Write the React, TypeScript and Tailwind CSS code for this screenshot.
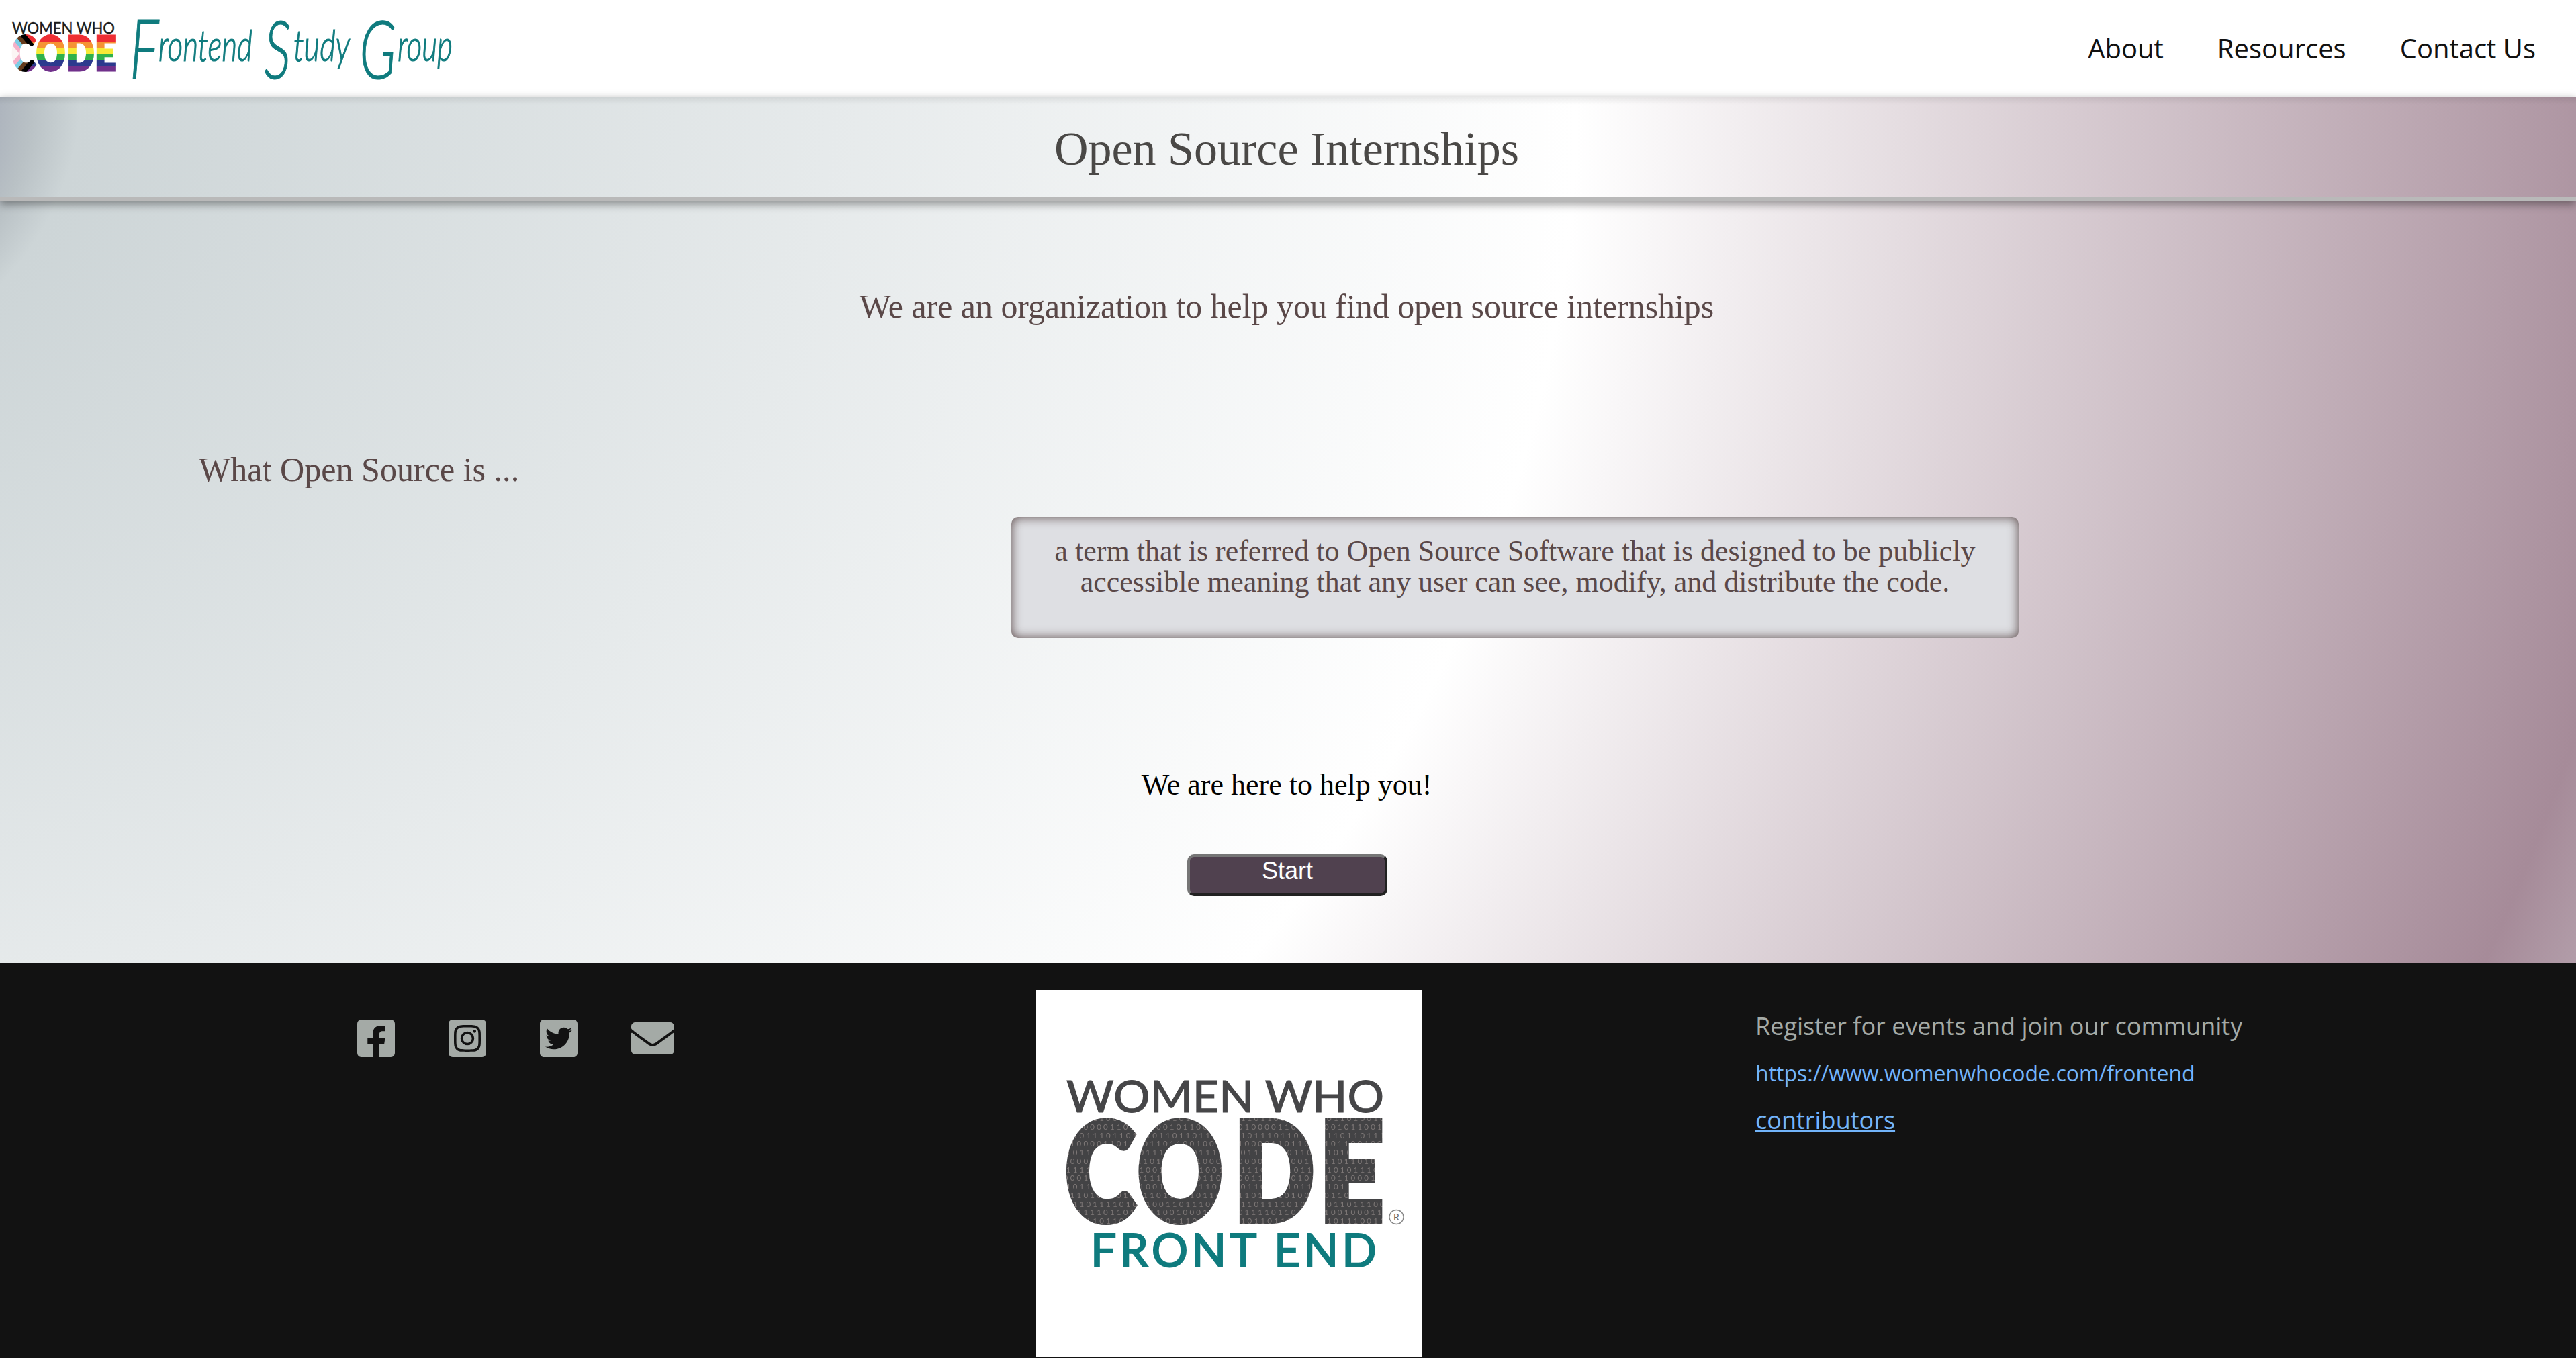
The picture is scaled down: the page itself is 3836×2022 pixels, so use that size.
import React from "react";
import {
  FaFacebookSquare,
  FaInstagramSquare,
  FaTwitterSquare,
  FaEnvelope,
} from "react-icons/fa";

const BINARY_ROWS = [
  "0111011001011010110100101",
  "1001000011010110010110010",
  "0110111011010101101101110",
  "1010000110110011011001001",
  "0101110010110111010101110",
  "1100001011001101101101000",
  "0111101101011001010111001",
  "1000110100010111011000110",
  "0101101011011001011011101",
  "1011010110100110110010110",
  "0011011110101100110111001",
  "1101111011010011001000110",
  "0110110110100101011100110",
];

function PrideLogo() {
  return (
    <svg className="block h-[144px] w-[190px] shrink-0" viewBox="0 0 190 144">
      <defs>
        <linearGradient id="rainbow" gradientUnits="userSpaceOnUse" x1="0" y1="53" x2="0" y2="107">
          <stop offset="0.167" stopColor="#ee2e34" />
          <stop offset="0.167" stopColor="#f59334" />
          <stop offset="0.333" stopColor="#f59334" />
          <stop offset="0.333" stopColor="#f6e936" />
          <stop offset="0.5" stopColor="#f6e936" />
          <stop offset="0.5" stopColor="#31b24b" />
          <stop offset="0.667" stopColor="#31b24b" />
          <stop offset="0.667" stopColor="#2c3a8e" />
          <stop offset="0.833" stopColor="#2c3a8e" />
          <stop offset="0.833" stopColor="#70308b" />
        </linearGradient>
        <pattern
          id="pride"
          patternUnits="userSpaceOnUse"
          width="400"
          height="144"
          patternTransform="scale(1.2987 1)"
        >
          <rect width="400" height="144" fill="url(#rainbow)" />
          <polygon points="4,10 4,150 62,80" fill="#000" clipPath="url(#letterC)" />
          <polygon points="-6,10 -6,150 53,80" fill="#643b1c" clipPath="url(#letterC)" />
          <polygon points="-14,10 -14,150 45,80" fill="#7bcde4" />
          <polygon points="-22,10 -22,150 37,80" fill="#f5b0c8" />
          <polygon points="-30,10 -30,150 29,80" fill="#fbf5f4" />
        </pattern>
        <clipPath id="letterC">
          <rect x="0" y="0" width="51" height="144" />
        </clipPath>
      </defs>
      <text
        x="18"
        y="49.5"
        textLength="153"
        lengthAdjust="spacingAndGlyphs"
        fontFamily="Lato"
        fontSize="23"
        fill="#1c1c1c"
        stroke="#1c1c1c"
        strokeWidth="0.4"
      >
        WOMEN WHO
      </text>
      <text
        transform="scale(0.77 1)"
        x="23 70.5 130 184"
        y="104.5"
        fontFamily="Lato"
        fontWeight="900"
        fontSize="68"
        fill="url(#pride)"
        stroke="url(#pride)"
        strokeWidth="5"
      >
        CODE
      </text>
    </svg>
  );
}

function FrontEndLogo() {
  return (
    <svg className="block h-[546px] w-[576px] bg-white" viewBox="1542 1474 576 546">
      <defs>
        <pattern
          id="binary"
          patternUnits="userSpaceOnUse"
          x="-10"
          y="1660"
          width="250"
          height="166"
          patternTransform="scale(1.2987 1)"
        >
          <rect width="250" height="166" fill="#434345" />
          {BINARY_ROWS.map((row, i) => (
            <text
              key={i}
              x={i % 2 ? -4 : 0}
              y={9 + i * 12.75}
              fontFamily="Lato"
              fontSize="11.5"
              letterSpacing="3.2"
              fill="#7d7776"
            >
              {row}
            </text>
          ))}
        </pattern>
      </defs>
      <text
        x="1588"
        y="1656"
        textLength="473"
        lengthAdjust="spacingAndGlyphs"
        fontFamily="Lato"
        fontSize="65"
        fill="#464648"
        stroke="#464648"
        strokeWidth="1.2"
      >
        WOMEN WHO
      </text>
      <g transform="translate(1588 0) scale(0.77 1)">
        <text
          x="0 140 327"
          y="1815"
          fontFamily="Lato"
          fontWeight="900"
          fontSize="197"
          fill="url(#binary)"
          stroke="url(#binary)"
          strokeWidth="14"
        >
          COD
          <tspan x="492" textLength="119" lengthAdjust="spacingAndGlyphs">
            E
          </tspan>
        </text>
      </g>
      <text
        x="1624"
        y="1886"
        textLength="426"
        lengthAdjust="spacing"
        fontFamily="Lato"
        fontSize="68"
        fill="#0f7b7e"
        stroke="#0f7b7e"
        strokeWidth="2"
      >
        FRONT END
      </text>
      <circle cx="2079.5" cy="1812" r="10.5" fill="none" stroke="#858585" strokeWidth="1.3" />
      <text x="2079.5" y="1817" textAnchor="middle" fontFamily="Lato" fontSize="14" fill="#666">
        R
      </text>
    </svg>
  );
}

function GroupName() {
  return (
    <svg className="block h-[144px] w-[500px] overflow-visible" viewBox="190 0 500 144">
      <text
        transform="scale(1 1.5)"
        fontFamily="Lato"
        fontStyle="italic"
        fontWeight="300"
        fontSize="44"
        fill="#0f7b7e"
        stroke="#0f7b7e"
        strokeWidth="0.8"
      >
        <tspan x="193" y="78" fontSize="82">F</tspan>
        <tspan x="236" y="61" textLength="140" lengthAdjust="spacingAndGlyphs">rontend</tspan>
        <tspan x="373" y="78" fontSize="80">{" S"}</tspan>
        <tspan x="437" y="61" textLength="84" lengthAdjust="spacingAndGlyphs">tudy</tspan>
        <tspan x="515" y="78" fontSize="80">{" G"}</tspan>
        <tspan x="592" y="61" textLength="82" lengthAdjust="spacingAndGlyphs">roup</tspan>
      </text>
    </svg>
  );
}

function Header() {
  return (
    <header className="flex h-[144px] items-center justify-between bg-white font-['Open_Sans',sans-serif]">
      <div className="flex items-center">
        <PrideLogo />
        <GroupName />
      </div>
      <nav className="flex gap-20 pr-[60px] text-[40px] leading-[54px] text-[#111]">
        <a>About</a>
        <a>Resources</a>
        <a>Contact Us</a>
      </nav>
    </header>
  );
}

function Main() {
  return (
    <main className="h-[1290px] bg-[radial-gradient(5000px_4082px_at_-437px_0px,#3c4354_0%,#aeb5be_8.74%,#b9c1c5_9.7%,#cdd5d7_11.12%,#ffffff_55.7%,#a68b99_88.56%,#b29da9_91.12%,#dedede_100%)] font-['Liberation_Serif',serif] text-[#5a4848]">
      <div className="h-3 bg-linear-to-b from-black/8 to-transparent" />
      <h1 className="-mt-3 h-[156px] border-b-[6px] border-[#b9b9b9] pt-1 pr-1 text-center text-[70px] leading-[148px] text-[#4a4846] shadow-[0_4px_12px_rgba(0,0,0,0.4)]">
        Open Source Internships
      </h1>
      <p className="mt-[127px] pr-1 text-center text-[49.9px] leading-[60px]">
        We are an organization to help you find open source internships
      </p>
      <h2 className="mt-[182px] ml-[296px] text-[50.1px] leading-[60px]">What Open Source is ...</h2>
      <p className="mt-[41px] ml-[1506px] h-[180px] w-[1500px] rounded-[10px] bg-[#dedfe3] px-10 pt-7 text-center text-[44px] leading-[46px] shadow-[inset_0_0_16px_#5a4848]">
        a term that is referred to Open Source Software that is designed to be publicly accessible
        meaning that any user can see, modify, and distribute the code.
      </p>
      <p className="mt-[194px] pr-1 text-center text-[44px] leading-[50px] text-black">
        We are here to help you!
      </p>
      <button className="mt-[78px] ml-[1768px] block h-[62px] w-[298px] rounded-[10px] border-4 border-t-[#767676] border-r-[#212121] border-b-[#212121] border-l-[#767676] bg-[#50414f] pb-3 text-center font-['Liberation_Sans',sans-serif] text-[36px] leading-[42px] text-white">
        Start
      </button>
    </main>
  );
}

function Footer() {
  return (
    <footer className="flex h-[588px] items-start bg-[#121212] font-['Open_Sans',sans-serif]">
      <div className="flex w-[1542px] items-center gap-20 pt-20 pl-[532px] text-[#a4aaa6]">
        <FaFacebookSquare className="h-16 w-14" />
        <FaInstagramSquare className="h-16 w-14" />
        <FaTwitterSquare className="h-16 w-14" />
        <FaEnvelope className="h-16 w-16" />
      </div>
      <div className="pt-10">
        <FrontEndLogo />
      </div>
      <div className="flex flex-col pt-[69px] pl-[496px] text-[36px] leading-[50px] text-[#a4aaa6]">
        <p>Register for events and join our community</p>
        <a className="mt-5 text-[32px] text-[#72b4fa]">https://www.womenwhocode.com/frontend</a>
        <a className="mt-5 text-[#72b4fa] underline">contributors</a>
      </div>
    </footer>
  );
}

export default function App() {
  return (
    <div className="h-[2022px] w-full overflow-hidden bg-[#121212]">
      <Header />
      <Main />
      <Footer />
    </div>
  );
}
